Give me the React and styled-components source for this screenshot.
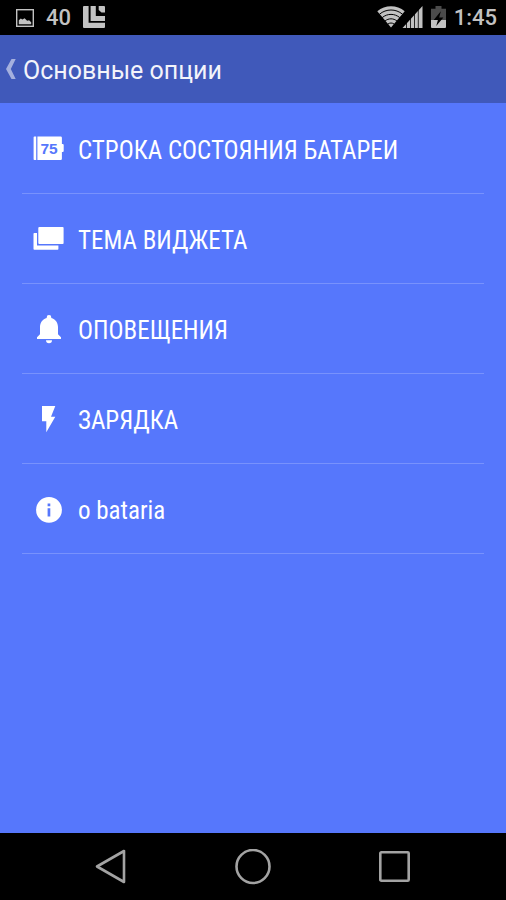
import React from "react";
import styled, { createGlobalStyle } from "styled-components";

const GlobalStyle = createGlobalStyle`
  * {
    box-sizing: border-box;
  }

  body {
    margin: 0;
    background: #5677fc;
    font-family: Roboto, "Noto Sans", sans-serif;
  }
`;

const Screen = styled.div`
  min-height: 100vh;
  display: flex;
  flex-direction: column;
  background: #5677fc;
`;

const StatusBar = styled.div`
  height: 35px;
  padding: 0 9px 0 16px;
  display: flex;
  align-items: center;
  justify-content: space-between;
  background: #000;
  color: #c2c2c2;
  font-size: 22px;
  font-weight: 500;
  line-height: 34px;
`;

const StatusGroup = styled.div`
  display: flex;
  align-items: center;
  gap: ${(props) => props.$gap}px;
`;

const StatusText = styled.span`
  padding-top: 1px;
`;

const Header = styled.header`
  height: 68px;
  padding: 2px 6px 0;
  display: flex;
  align-items: center;
  background: #4059ba;
`;

const BackButton = styled.button`
  display: flex;
  align-items: center;
  gap: 7px;
  padding: 0;
  border: 0;
  background: none;
  color: #f3f4fa;
  font: inherit;
  cursor: pointer;
`;

const Title = styled.h1`
  margin: 0;
  padding-top: 2px;
  font-size: 25px;
  font-weight: 400;
  line-height: 32px;
`;

const List = styled.ul`
  flex: 1;
  margin: 0;
  padding: 1px 22px 0;
  list-style: none;
`;

const Item = styled.li`
  height: 90px;
  border-bottom: 1px solid #7892fd;
`;

const ItemButton = styled.button`
  width: 100%;
  height: 100%;
  display: flex;
  align-items: center;
  gap: 13px;
  padding: 0 0 0 11px;
  border: 0;
  background: none;
  color: #fff;
  font-family: "Roboto Condensed", "Liberation Sans Narrow", Roboto, sans-serif;
  font-size: 25px;
  line-height: 32px;
  text-align: left;
  cursor: pointer;
`;

const ItemLabel = styled.span`
  padding-top: 4px;
`;

const IconBox = styled.svg`
  flex: none;
  width: 32px;
  height: 32px;
  fill: #fff;
`;

const NavBar = styled.nav`
  height: 67px;
  padding: 0 8%;
  display: grid;
  grid-template-columns: repeat(3, 1fr);
  background: #000;
`;

const NavButton = styled.button`
  display: flex;
  align-items: center;
  justify-content: center;
  padding: 0;
  border: 0;
  background: none;
  cursor: pointer;

  svg {
    fill: none;
    stroke: #a3a3a3;
    stroke-width: 2.6;
    stroke-linejoin: round;
  }
`;

const BatteryIcon = () => (
  <IconBox viewBox="0 0 32 32" aria-hidden="true">
    <path d="M1.4 3.5h1.8V27H1.4a.8.8 0 0 1-.8-.8V4.3a.8.8 0 0 1 .8-.8z" />
    <path d="M4.4 3.5h23.3a1.2 1.2 0 0 1 1.2 1.2V11h.8a1 1 0 0 1 1 1v6a1 1 0 0 1-1 1h-.8v6.800a1.2 1.2 0 0 1-1.2 1.2H4.4z" />
    <text
      x="16"
      y="20.5"
      fill="#5677fc"
      fontFamily='"Liberation Sans", sans-serif'
      fontSize="15.5"
      fontWeight="700"
      textAnchor="middle"
    >
      75
    </text>
  </IconBox>
);

const WidgetIcon = () => (
  <IconBox viewBox="0 0 32 32" aria-hidden="true">
    <rect x="5.3" y="4" width="25.3" height="17" rx="1" />
    <path d="M1.3 10H4v12.5h21.4V26a.8.8 0 0 1-.8.8H1.3a.8.8 0 0 1-.8-.8V10.8a.8.8 0 0 1 .8-.8z" />
  </IconBox>
);

const BellIcon = () => (
  <IconBox viewBox="0 0 32 32" aria-hidden="true">
    <path d="M16 2a2.3 2.3 0 0 1 2.3 2.4V5c4.1 1 6.7 4.6 6.7 9v7.3l3 3V26H4v-1.7l3-3V14c0-4.4 2.6-8 6.7-9v-.6A2.3 2.3 0 0 1 16 2z" />
    <path d="M13 27.3h6a3 3 0 0 1-6 0z" />
  </IconBox>
);

const BoltIcon = () => (
  <IconBox viewBox="0 0 32 32" aria-hidden="true">
    <path d="M9 3h13.3L18 13.8h4.3l-9 15.5v-11H9z" />
  </IconBox>
);

const InfoIcon = () => (
  <IconBox viewBox="0 0 32 32" aria-hidden="true">
    <path
      fillRule="evenodd"
      d="M16 4a12.9 12.9 0 1 1 0 25.8a12.9 12.9 0 1 1 0-25.800zM14.6 10.5v2.7h2.7v-2.7zM14.6 15.2v8.200h2.7v-8.200z"
    />
  </IconBox>
);

const PictureIcon = () => (
  <svg width="18" height="18" viewBox="0 0 18 18" aria-hidden="true">
    <rect x=".7" y=".7" width="16.6" height="16.6" fill="none" stroke="#c2c2c2" strokeWidth="1.4" />
    <path d="M2.8 15.2v-4l2-1.7 1.6 1 2.2-1.2 2.5 2.5 2-.6 2.1 2v2z" fill="#c2c2c2" />
  </svg>
);

const BoardIcon = () => (
  <svg width="22" height="23" viewBox="0 0 22 23" fill="#c2c2c2" aria-hidden="true">
    <path d="M1 0h4.6v16.8H22V21a1 1 0 0 1-1 1H1a1 1 0 0 1-1-1V1a1 1 0 0 1 1-1z" />
    <path d="M7.6 0h5.2v10H22v5H7.6z" />
    <path d="M15.700 0H21a1 1 0 0 1 1 1v5.500h-3.500l-2.800-2.500z" />
  </svg>
);

const WifiIcon = () => (
  <svg width="28" height="23" viewBox="0 0 28 23" aria-hidden="true">
    <path d="M.3 5.2C8-1.300 20-1.300 27.700 5.200L14 21.500z" fill="#c2c2c2" />
    <path
      d="M2.5 8.200c6.700-5.600 16.300-5.600 23 0M5.200 11.600c5.200-4.300 12.400-4.300 17.600 0M8 15c3.600-2.900 8.400-2.900 12 0M10.700 18.200c2-1.600 4.600-1.600 6.600 0"
      fill="none"
      stroke="#000"
      strokeWidth="1"
    />
  </svg>
);

const SignalIcon = () => (
  <svg width="18" height="23" viewBox="3 0 18 23" overflow="visible" aria-hidden="true">
    <path d="M20.5 0v22H.5z" fill="#c2c2c2" />
    <path d="M4.5 0v23M8.5 0v23M12.5 0v23M16.3 0v23" stroke="#000" strokeWidth=".8" />
  </svg>
);

const ChargingIcon = () => (
  <svg width="15" height="23" viewBox="0 0 15 23" aria-hidden="true">
    <path d="M4.5 0h6v2.7H15V14H0V2.700h4.500z" fill="#4b4b4b" />
    <path d="M0 14h15v7a1 1 0 0 1-1 1H1a1 1 0 0 1-1-1z" fill="#c2c2c2" />
    <path d="M9.8 5.2L2.700 14h4.200l-1.700 6 7.200-8.600H8.200z" fill="#000" />
  </svg>
);

const ITEMS = [
  { label: "СТРОКА СОСТОЯНИЯ БАТАРЕИ", Icon: BatteryIcon },
  { label: "ТЕМА ВИДЖЕТА", Icon: WidgetIcon },
  { label: "ОПОВЕЩЕНИЯ", Icon: BellIcon },
  { label: "ЗАРЯДКА", Icon: BoltIcon },
  { label: "о bataria", Icon: InfoIcon },
];

const App = () => {
  return (
    <Screen>
      <GlobalStyle />

      <StatusBar>
        <StatusGroup $gap={12}>
          <PictureIcon />
          <StatusText>40</StatusText>
          <BoardIcon />
        </StatusGroup>
        <StatusGroup $gap={8}>
          <StatusGroup $gap={0}>
            <WifiIcon />
            <SignalIcon />
          </StatusGroup>
          <ChargingIcon />
          <StatusText>1:45</StatusText>
        </StatusGroup>
      </StatusBar>

      <Header>
        <BackButton type="button">
          <svg width="10" height="22" viewBox="0 0 10 22" aria-hidden="true">
            <path d="M5.5 0h4.200L4.800 10l4.900 10H5.500L0 10z" fill="#a5b0de" />
          </svg>
          <Title>Основные опции</Title>
        </BackButton>
      </Header>

      <List>
        {ITEMS.map(({ label, Icon }) => (
          <Item key={label}>
            <ItemButton type="button">
              <Icon />
              <ItemLabel>{label}</ItemLabel>
            </ItemButton>
          </Item>
        ))}
      </List>

      <NavBar>
        <NavButton type="button" aria-label="Назад">
          <svg width="32" height="36" viewBox="0 0 32 36">
            <path d="M29 2v31L2 17.500z" />
          </svg>
        </NavButton>
        <NavButton type="button" aria-label="Домой">
          <svg width="36" height="36" viewBox="0 0 36 36">
            <circle cx="18" cy="17.5" r="16.5" />
          </svg>
        </NavButton>
        <NavButton type="button" aria-label="Недавние">
          <svg width="32" height="32" viewBox="0 0 32 32">
            <rect x="1.300" y="1.300" width="28.400" height="28.400" rx="1" />
          </svg>
        </NavButton>
      </NavBar>
    </Screen>
  );
};

export default App;
